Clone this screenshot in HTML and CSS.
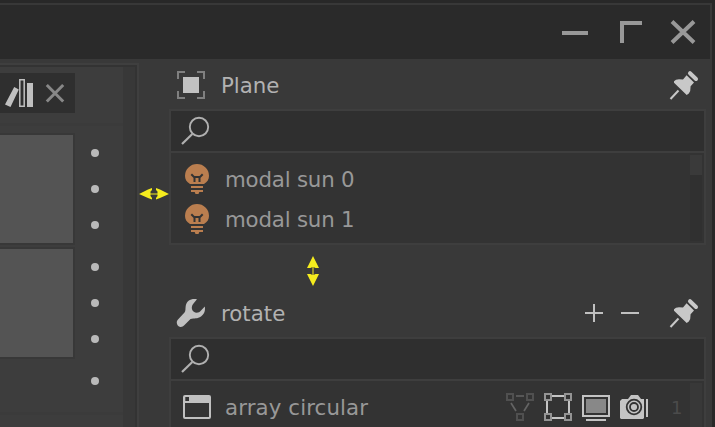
FILE: index.html
```html
<!DOCTYPE html>
<html lang="en">
<head>
<meta charset="utf-8">
<title>Plane</title>
<link rel="stylesheet" href="styles.css">
</head>
<body>
<svg class="defs" width="0" height="0">
  <symbol id="pin" viewBox="0 0 30 30">
    <path d="M1.500 29 9.500 20.500" stroke="#c8c8c8" stroke-width="2"/>
    <path fill="#c8c8c8" d="M5 11.200 7 9.800 10 9.200 14 9.400 17.600 5.300 25 12.600 21.600 16.300 21.200 21 19.800 23.500 17.700 25 5 12.800Z"/>
    <path d="M21 3.200 27 9" stroke="#c8c8c8" stroke-width="4" stroke-linecap="round"/>
  </symbol>
  <symbol id="search" viewBox="0 0 30 30">
    <circle cx="19" cy="11" r="9.200" fill="none" stroke="#b0b0b0" stroke-width="1.900"/>
    <path d="M12.300 18 2 28" stroke="#b0b0b0" stroke-width="2.200"/>
  </symbol>
  <symbol id="bulb" viewBox="0 0 24 30">
    <path fill="#ba7e4f" d="M5 20C1.500 18 0 15 0 11.700A12 11.700 0 0 1 24 11.700C24 15 22.500 18 19 20ZM6 22H18V24H6ZM6 26H18V28H14.300L13.500 30H10.500L9.700 28H6Z"/>
    <path fill="none" stroke="#333" stroke-width="2" d="M6.300 10.300 9 13H15L17.700 10.300M9.500 13V18M14.500 13V18"/>
  </symbol>
</svg>
<div class="window">
  <header class="titlebar">
    <svg width="136" height="30" viewBox="560 17 136 30" fill="none" stroke="#989898" stroke-width="4">
      <path d="M562 33H588M622 43V23H642M672 21.500 694 42.500M694 21.500 672 42.500"/>
    </svg>
  </header>
  <main class="body">
    <section class="side">
      <div class="side-content">
        <div class="tab">
          <svg width="75" height="40" viewBox="0 73 75 40">
            <path fill="#c0c0c0" d="M14.200 87 18.800 89.500 10.500 107 5 104.500ZM27 83H33V107H27Z"/>
            <path fill="none" stroke="#c0c0c0" stroke-width="1.500" d="M19.800 79.800H24.200V106.200H19.800Z"/>
            <path stroke="#888" stroke-width="3" d="M46.800 85 63.200 101.500M63.200 85 46.800 101.500"/>
          </svg>
        </div>
        <div class="rule"></div>
        <div class="group"><div class="card"></div><div class="dots"><i></i><i></i><i></i></div></div>
        <div class="group"><div class="card"></div><div class="dots"><i></i><i></i><i></i></div></div>
        <div class="group last"><div class="dots"><i></i></div></div>
        <div class="rule"></div>
      </div>
      <div class="side-scroll"></div>
    </section>
    <section class="panels">
      <div class="heading">
        <svg class="lead" width="30" height="30" viewBox="176 70 30 30"><rect x="183" y="77" width="16" height="16" fill="#c2c2c2"/><path fill="none" stroke="#808080" stroke-width="2" d="M178 79V72H185M197 72H204V79M204 91V98H197M185 98H178V91"/></svg>
        <span class="title">Plane</span>
        <svg class="pin" width="30" height="30"><use href="#pin"/></svg>
      </div>
      <div class="box">
        <div class="search"><svg width="30" height="30"><use href="#search"/></svg></div>
        <div class="list">
          <div class="rows">
            <div class="row"><svg class="bulb" width="24" height="30"><use href="#bulb"/></svg><span class="sun">modal sun 0</span></div>
            <div class="row"><svg class="bulb" width="24" height="30"><use href="#bulb"/></svg><span class="sun">modal sun 1</span></div>
          </div>
          <div class="scroll"><div class="thumb"></div></div>
        </div>
      </div>
      <div class="heading second">
        <svg class="lead" width="30" height="30" viewBox="176 298 30 30">
          <path fill="#c0c0c0" d="M197 299.300C191 298.200 186.500 301 185.700 306 185.300 309 185.800 311 184.500 312.500L178 319.500C175.500 322 177 326.500 180.500 327 182 327.100 183.200 326.500 184 325.600L190.500 319C194 318 197.500 319 201 316.500 204.500 314 205.500 310.500 204.800 306.500L201 310.500C199 313 196 313.500 193.500 311.500 191.200 309.500 191.300 306 193.500 303.500Z"/>
        </svg>
        <span class="title">rotate</span>
        <svg class="ops" width="56" height="24" viewBox="584 301 56 24"><path stroke="#c0c0c0" stroke-width="2" d="M585 313H603M594 304V322M621 313H639"/></svg>
        <svg class="pin" width="30" height="30"><use href="#pin"/></svg>
      </div>
      <div class="box open">
        <div class="search"><svg width="30" height="30"><use href="#search"/></svg></div>
        <div class="list">
          <div class="rows">
            <div class="row">
              <svg class="win" width="28" height="26" viewBox="183 394 28 26"><rect x="184" y="396" width="26" height="22" rx="1" fill="none" stroke="#c0c0c0" stroke-width="2"/><path fill="#c0c0c0" d="M184 396H210V403H184Z"/><path fill="#333" d="M185.300 397H189V401H185.300Z"/></svg>
              <span class="array">array circular</span>
              <svg class="tools" width="146" height="32" viewBox="504 391 146 32" fill="none">
                <g stroke="#505050" stroke-width="2"><path d="M507 394H513V400H507ZM527 394H533V400H527ZM517 414H523V420H517Z"/><path stroke="#646464" stroke-width="1.700" d="M516 396H524M511 403 516 411M529 403 524 411"/></g>
                <path stroke="#c4c4c4" stroke-width="2" d="M552 396H564M552 418H564M547 401V413M569 401V413"/>
                <path stroke="#949494" stroke-width="2" d="M545 394H551V400H545ZM565 394H571V400H565ZM545 414H551V420H545ZM565 414H571V420H565Z"/>
                <path stroke="#c4c4c4" stroke-width="2" d="M583 396H609V416H583ZM586 420H606"/><path fill="#888" d="M586 399H606V413H586Z"/>
                <path fill="#c4c4c4" d="M620 401 622 399H628L631 395H638L641 399H644V418L643 419H621L620 418ZM646 399H648V417H646Z"/>
                <circle cx="634" cy="407" r="7.300" stroke="#333" stroke-width="1.800"/><circle cx="634" cy="407" r="4" stroke="#333" stroke-width="1.800"/>
              </svg>
              <span class="count">1</span>
            </div>
          </div>
          <div class="scroll"></div>
        </div>
      </div>
    </section>
  </main>
</div>
<svg class="grip grip-x" width="32" height="12" viewBox="0 0 32 12" fill="#f5ec1e"><path d="M1 6 10 1.500 14 0V2L12.500 3.500V5.500H19.500V3.500L18 2V0L22 1.500 31 6 22 10 18 11.500V10L19.500 8V6.500H12.500V8L14 10V11.500L10 10Z"/></svg>
<svg class="grip grip-y" width="12" height="32" viewBox="0 0 12 32" fill="#f5ec1e"><path d="M6 1 10.500 10 12 13H8.500L6.500 12V20L8.500 19H12L10.500 22 6 31 1.500 22 0 19H3.500L5.500 20V12L3.500 13H0L1.500 10Z"/></svg>
</body>
</html>
```
FILE: styles.css
```css
* { box-sizing: border-box; }
html { overflow: hidden; }
body { margin: 0; display: flow-root; width: 715px; height: 427px; overflow: hidden; background: #282828; font: 21.33px "DejaVu Sans", sans-serif; color: #989898; }
svg { display: block; flex: none; }
.defs { position: absolute; }
.window { margin-top: 3px; width: 712px; height: 424px; overflow: hidden; border-top: 2px solid #383838; border-right: 2px solid #393939; display: flex; flex-direction: column; }
.titlebar { height: 54px; flex: none; background: #2a2a2a; display: flex; justify-content: flex-end; padding: 12px 14px 0 0; }
.body { flex: 1; min-height: 0; background: #393939; display: flex; }
.side { width: 139px; flex: none; margin-top: 4px; border: solid #3f3f3f; border-width: 2px 2px 0 0; display: flex; box-shadow: inset -2px 2px #333; padding: 2px 2px 0 0; }
.side-content { width: 123px; background: #3d3d3d; padding-top: 6px; }
.side-scroll { flex: 1; background: #383838; }
.tab { width: 75px; height: 40px; background: #2f2f2f; margin-bottom: 10px; }
.rule { height: 3px; background: #3b3b3b; }
.group { display: flex; margin-top: 7px; height: 112px; }
.group + .group { margin-top: 2px; }
.card { width: 75px; border: solid #383838; border-width: 2px 2px 2px 0; background: #545454; }
.dots { display: flex; flex-direction: column; gap: 28px; padding: 16px 0 0 16px; }
.dots i { width: 8px; height: 8px; border-radius: 50%; background: #bababa; }
.group.last { height: 51px; padding-left: 75px; }
.panels { flex: 1; padding-left: 30px; display: flex; flex-direction: column; }
.heading { height: 50px; flex: none; display: flex; padding: 11px 11px 0 7px; color: #b2b2b2; }
.second { height: 92px; padding-top: 53px; }
.title { margin-left: 15px; line-height: 31px; }
.pin { margin-left: auto; }
.ops { margin: 3px 0 0 auto; }
.ops + .pin { margin-left: 29px; }
.box { width: 537px; margin-right: 4px; border: 2px solid #3e3e3e; flex: none; background: #333; }
.open { flex: 1; border-bottom: 0; min-height: 0; overflow: hidden; display: flex; flex-direction: column; }
.search { height: 42px; flex: none; border-bottom: 2px solid #3e3e3e; background: #2f2f2f; padding: 5px 0 0 9px; }
.list { display: flex; padding: 2px 2px 2px 0; height: 90px; }
.open .list { flex: 1; min-height: 0; padding-bottom: 0; }
.rows { flex: 1; padding-top: 4px; }
.row { height: 40px; display: flex; align-items: center; }
.row > span { line-height: 40px; white-space: nowrap; }
.row > .sun, .row > .array { padding-top: 2px; }
.sun { letter-spacing: -0.2px; }
.array { letter-spacing: 0.1px; }
.bulb { margin: 0 16px 0 14px; }
.win { margin: 0 14px 0 12px; }
.tools { margin-left: auto; }
.row > .count { width: 12px; margin: 0 7px 0 21px; color: #4b4b4b; font-size: 18px; padding-top: 2px; }
.scroll { width: 12px; background: #303030; }
.open .scroll { background: #383838; }
.thumb { height: 20px; background: #3a3a3a; }
.grip { position: absolute; }
.grip-x { left: 138px; top: 188px; }
.grip-y { left: 307px; top: 255px; }
```
